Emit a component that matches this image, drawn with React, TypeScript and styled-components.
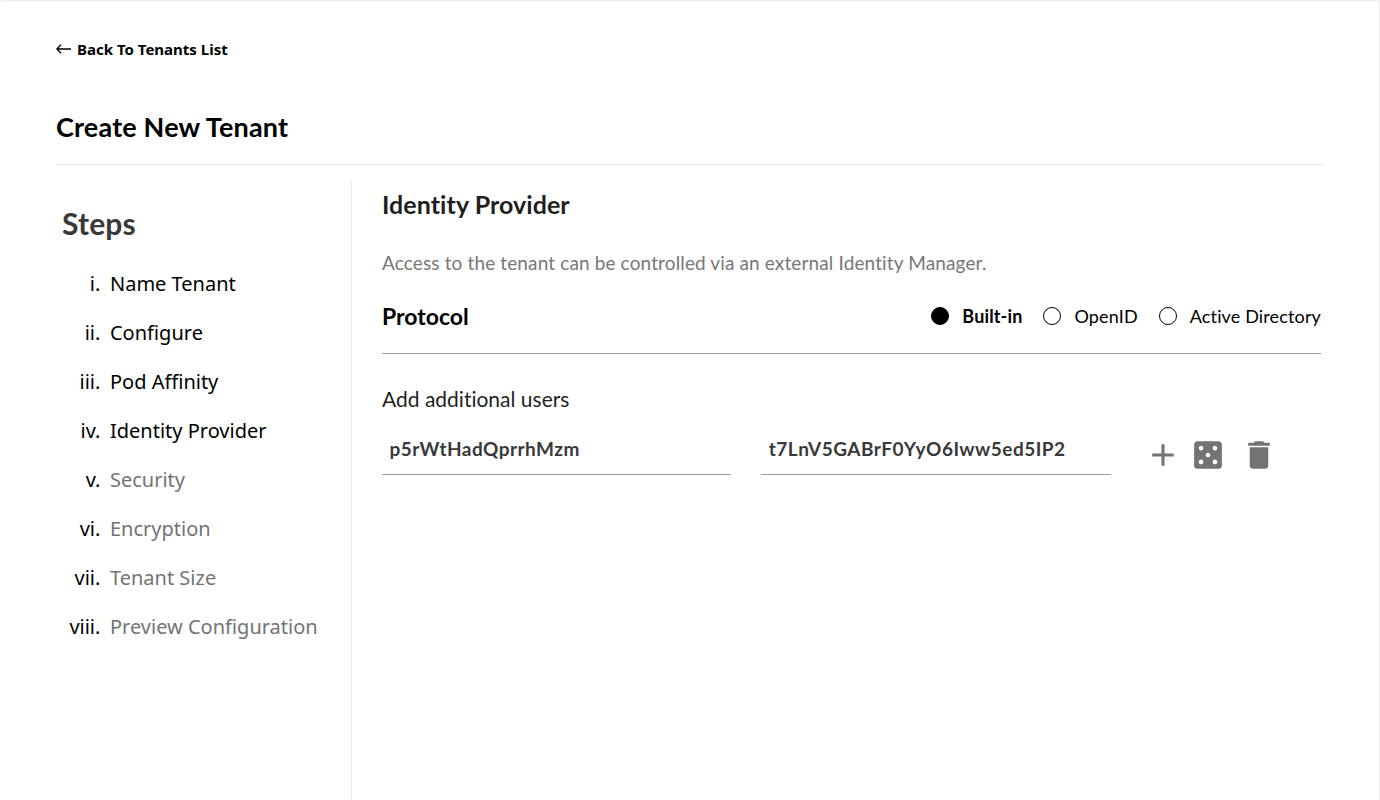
import React from "react";
import styled, { createGlobalStyle } from "styled-components";

const GlobalStyle = createGlobalStyle`
  * { box-sizing: border-box; }
  body {
    margin: 0;
    background: #f7f7f7;
    overflow: hidden;
    font-family: Lato, "Liberation Sans", sans-serif;
    font-variant-ligatures: none;
    color: #000;
  }
`;

const Card = styled.main`
  display: flex;
  flex-direction: column;
  height: 810px;
  padding: 0 55px 0 56px;
  border-top: 1px solid #e9ebeb;
  border-right: 1px solid #eaeaea;
  border-radius: 5px;
  background: #fff;
`;

const BackLink = styled.a`
  display: flex;
  align-items: center;
  height: 22px;
  margin-top: 37px;
  font: 700 15px/22px "Noto Sans", sans-serif;
`;

const BackArrow = styled.svg`
  width: 15px;
  height: 10px;
  margin: 0 6px 0 0;
`;

const PageTitle = styled.h1`
  height: 105px;
  margin: 0;
  padding-top: 51px;
  border-bottom: 1px solid #e9ebeb;
  font-size: 27px;
  line-height: 32px;
  font-weight: 700;
  letter-spacing: 0.18px;
`;

const Columns = styled.div`
  display: flex;
  flex: 1;
  margin-top: 15px;
`;

const Sidebar = styled.nav`
  width: 296px;
  padding: 23px 0 0 6px;
  border-right: 1px solid #eaeaea;
`;

const SidebarTitle = styled.h2`
  margin: 0 0 18px;
  color: #393939;
  font-size: 30px;
  line-height: 40px;
  font-weight: 700;
  letter-spacing: 0.15px;
`;

const StepList = styled.ol`
  margin: 0;
  padding: 0;
  list-style: none;
`;

const Step = styled.li<{ $pending: boolean }>`
  display: flex;
  height: 49px;
  color: ${(p) => (p.$pending ? "#737373" : "#000")};
  font: 400 20px/46px "Noto Sans", sans-serif;
  font-variant-ligatures: normal;
`;

const Numeral = styled.span`
  width: 38.4px;
  margin-right: 9.6px;
  color: #000;
  text-align: right;
`;

const Content = styled.section`
  flex: 1;
  padding: 0 3px 0 30px;
`;

const SectionTitle = styled.h2`
  margin: 8px 0 0;
  color: #1f1f1f;
  font-size: 25px;
  line-height: 32px;
  font-weight: 700;
  letter-spacing: 0.06px;
`;

const Description = styled.p`
  margin: 30px 0 0;
  color: #777;
  font-size: 19px;
  line-height: 26px;
  letter-spacing: 0.13px;
`;

const ProtocolRow = styled.div`
  display: flex;
  align-items: flex-start;
  justify-content: space-between;
  height: 78px;
  padding-top: 26px;
  border-bottom: 1px solid #9c9c9c;
`;

const ProtocolTitle = styled.h3`
  margin: 0;
  font-size: 23px;
  line-height: 28px;
  font-weight: 700;
`;

const RadioGroup = styled.div`
  display: flex;
  gap: 21px;
`;

const RadioOption = styled.label<{ $selected: boolean }>`
  display: flex;
  align-items: center;
  gap: 13px;
  height: 28px;
  font-size: 18px;
  letter-spacing: 0.14px;
  font-weight: ${(p) => (p.$selected ? 700 : 400)};
`;

const RadioDot = styled.span<{ $selected: boolean }>`
  width: 18px;
  height: 18px;
  border: 1px solid #000;
  border-radius: 50%;
  background: ${(p) => (p.$selected ? "#000" : "#fff")};
`;

const GroupLabel = styled.div`
  margin-top: 31px;
  color: #1f1f1f;
  font-size: 21px;
  line-height: 28px;
`;

const UserRow = styled.div`
  display: flex;
  gap: 30px;
  margin-top: 9px;
`;

const Field = styled.input`
  width: 349.3px;
  height: 53px;
  padding: 0 8px 0 7.5px;
  border: 0;
  border-bottom: 1px solid #9c9c9c;
  border-radius: 0;
  outline: 0;
  background: transparent;
  color: #393939;
  font: 700 19px Lato, sans-serif;
  letter-spacing: 0.47px;
`;

const Actions = styled.div`
  display: flex;
  align-items: center;
  gap: 9px;
  margin: 15px 0 0 4.4px;
  height: 36px;
`;

const IconButton = styled.button<{ $apart?: boolean }>`
  display: flex;
  margin-left: ${(p) => (p.$apart ? 6 : 0)}px;
  padding: 0;
  border: 0;
  background: none;
  color: #737373;
`;

const Icon = styled.svg.attrs({ viewBox: "0.32 0.32 23.36 23.36" })`
  width: 36px;
  height: 36px;
  fill: currentColor;
`;

const steps = [
  ["i.", "Name Tenant"],
  ["ii.", "Configure"],
  ["iii.", "Pod Affinity"],
  ["iv.", "Identity Provider"],
  ["v.", "Security"],
  ["vi.", "Encryption"],
  ["vii.", "Tenant Size"],
  ["viii.", "Preview Configuration"],
];

const protocols = ["Built-in", "OpenID", "Active Directory"];

export default function App() {
  return (
    <>
      <GlobalStyle />
      <Card>
        <BackLink>
          <BackArrow viewBox="0 0 15 10" fill="none" stroke="#000" strokeWidth="1.4">
            <path d="M15 5H1M5 .8.9 5 5 9.2" />
          </BackArrow>
          Back To Tenants List
        </BackLink>
        <PageTitle>Create New Tenant</PageTitle>
        <Columns>
          <Sidebar>
            <SidebarTitle>Steps</SidebarTitle>
            <StepList>
              {steps.map(([numeral, name], i) => (
                <Step key={numeral} $pending={i > 3}>
                  <Numeral>{numeral}</Numeral>
                  {name}
                </Step>
              ))}
            </StepList>
          </Sidebar>
          <Content>
            <SectionTitle>Identity Provider</SectionTitle>
            <Description>
              Access to the tenant can be controlled via an external Identity Manager.
            </Description>
            <ProtocolRow>
              <ProtocolTitle>Protocol</ProtocolTitle>
              <RadioGroup>
                {protocols.map((name, i) => (
                  <RadioOption key={name} $selected={i === 0}>
                    <RadioDot $selected={i === 0} />
                    {name}
                  </RadioOption>
                ))}
              </RadioGroup>
            </ProtocolRow>
            <GroupLabel>Add additional users</GroupLabel>
            <UserRow>
              <Field defaultValue="p5rWtHadQprrhMzm" aria-label="Access key" />
              <Field defaultValue="t7LnV5GABrF0YyO6Iww5ed5IP2" aria-label="Secret key" />
              <Actions>
                <IconButton aria-label="Add">
                  <Icon>
                    <path d="M19 13h-6v6h-2v-6H5v-2h6V5h2v6h6v2z" />
                  </Icon>
                </IconButton>
                <IconButton aria-label="Randomize">
                  <Icon>
                    <path d="M19 3H5c-1.1 0-2 .9-2 2v14c0 1.1.9 2 2 2h14c1.1 0 2-.9 2-2V5c0-1.1-.9-2-2-2zM7.5 18c-.83 0-1.5-.67-1.5-1.5S6.67 15 7.5 15s1.5.67 1.5 1.5S8.33 18 7.5 18zm0-9C6.67 9 6 8.33 6 7.5S6.67 6 7.5 6 9 6.67 9 7.5 8.33 9 7.5 9zm4.5 4.5c-.83 0-1.5-.67-1.5-1.5s.67-1.5 1.5-1.5 1.5.67 1.5 1.5-.67 1.5-1.5 1.5zm4.5 4.5c-.83 0-1.5-.67-1.5-1.5s.67-1.5 1.5-1.5 1.5.67 1.5 1.5-.67 1.5-1.5 1.5zm0-9c-.83 0-1.5-.67-1.5-1.5S15.67 6 16.5 6s1.5.67 1.5 1.5S17.33 9 16.5 9z" />
                  </Icon>
                </IconButton>
                <IconButton aria-label="Delete" $apart>
                  <Icon>
                    <path d="M6 19c0 1.1.9 2 2 2h8c1.1 0 2-.9 2-2V7H6v12zM19 4h-3.5l-1-1h-5l-1 1H5v2h14V4z" />
                  </Icon>
                </IconButton>
              </Actions>
            </UserRow>
          </Content>
        </Columns>
      </Card>
    </>
  );
}
